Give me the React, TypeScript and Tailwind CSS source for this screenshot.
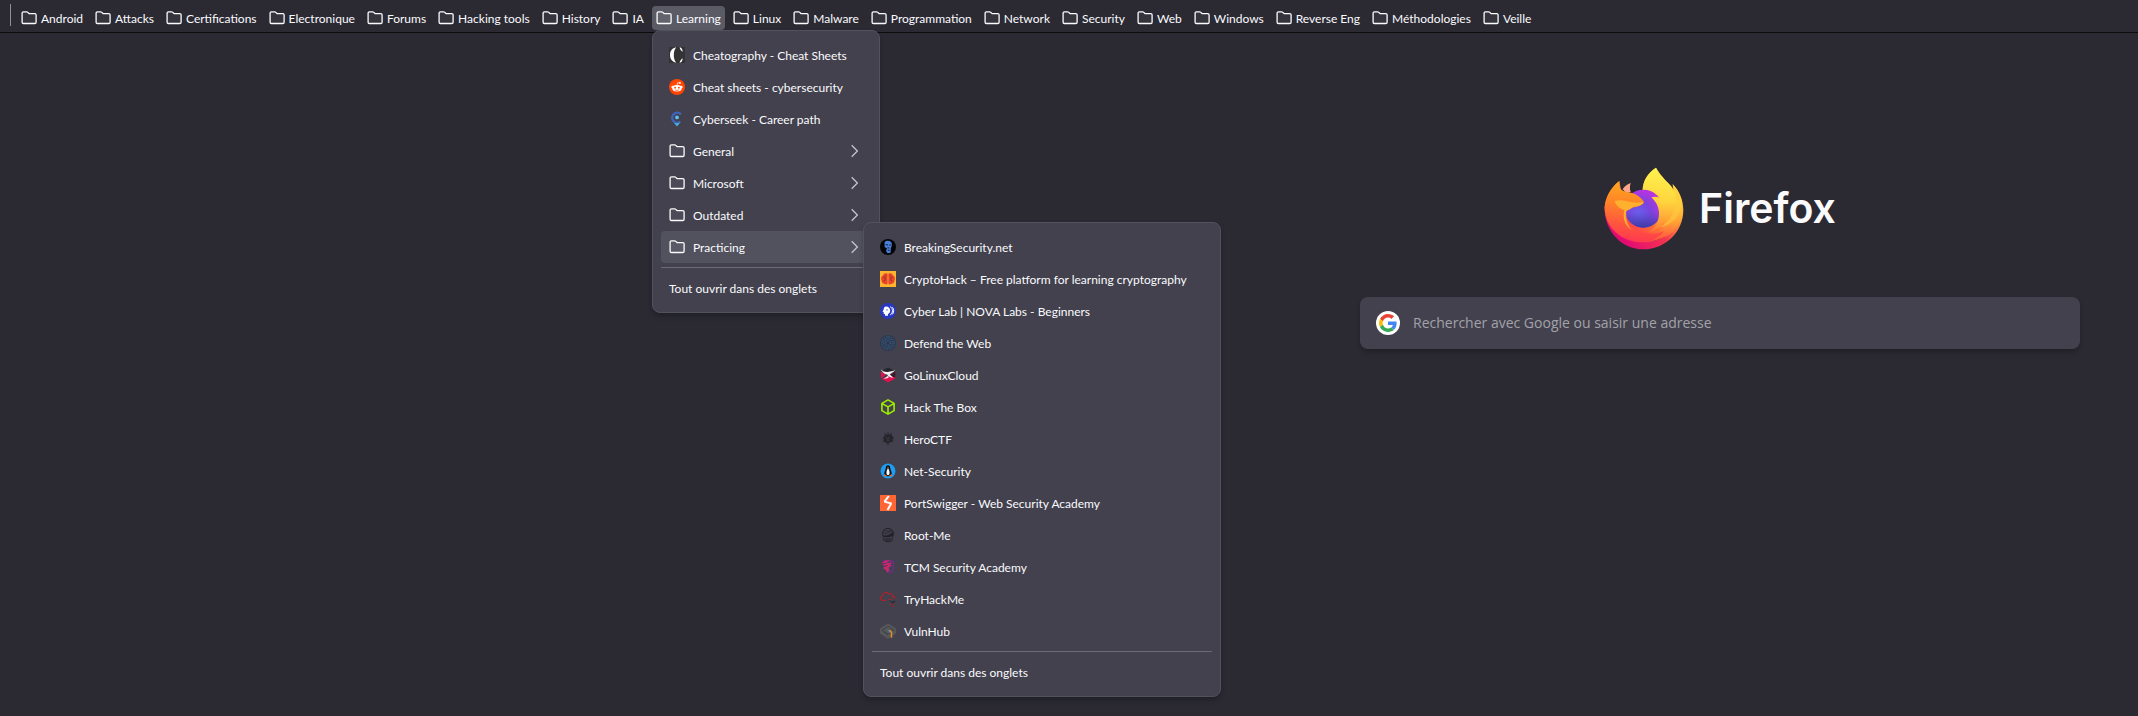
import type { ReactNode } from "react";

type Entry = { label: string; icon: ReactNode; submenu?: ReactNode; active?: boolean };

function FolderIcon() {
  return (
    <svg viewBox="0 0 16 16" className="size-4 shrink-0" fill="#ffffff0d" stroke="#fbfbfe" strokeWidth="1.3" strokeLinejoin="round">
      <path d="M1.1 12.2V3.2a1.3 1.3 0 0 1 1.3-1.3h3.2c.5 0 .9.2 1.2.5l.9.9c.3.3.5.4.9.4h5.2a1.3 1.3 0 0 1 1.3 1.3v7.2a1.3 1.3 0 0 1-1.3 1.3H2.4a1.3 1.3 0 0 1-1.3-1.3z" />
    </svg>
  );
}

function Chevron() {
  return (
    <svg viewBox="0 0 16 16" className="ml-auto size-4 shrink-0" fill="none" stroke="#c5c5cc" strokeWidth="1.3">
      <path d="M4.7 2.2l5.7 5.8-5.7 5.8" />
    </svg>
  );
}

function Glyph({ children }: { children: ReactNode }) {
  return (
    <svg viewBox="0 0 16 16" className="size-4 shrink-0">
      {children}
    </svg>
  );
}

const icons = {
  cheatography: (
    <Glyph>
      <path fill="#333" d="M0 0h16v16H0z" />
      <path fill="#fff" d="M7.200.3C3 1.200 1 4.200 1 8s2 6.800 6.200 7.700C5.500 13.600 4.800 11 4.800 8S5.500 2.400 7.200.3z" />
      <path fill="#fff" d="M10.600.2c2.200.5 3 2.200 3.100 4.500-1.600-1-2.700-2.500-3.100-4.500zM10.600 15.800c2.200-.5 3-2.200 3.100-4.500-1.600 1-2.700 2.500-3.100 4.500z" />
    </Glyph>
  ),
  reddit: (
    <Glyph>
      <circle cx="8" cy="8" r="8" fill="#ff4500" />
      <ellipse cx="8" cy="9.300" rx="4.700" ry="3.300" fill="#fff" />
      <circle cx="3.600" cy="8" r="1.200" fill="#fff" />
      <circle cx="12.400" cy="8" r="1.200" fill="#fff" />
      <circle cx="10.900" cy="3.900" r=".95" fill="#fff" />
      <path d="M8 6.200l.6-2.500 2.300.3" fill="none" stroke="#fff" strokeWidth=".7" />
      <circle cx="6.100" cy="8.700" r=".9" fill="#ff4500" />
      <circle cx="9.900" cy="8.700" r=".9" fill="#ff4500" />
      <path d="M6 10.800c1.200.8 2.800.8 4 0" fill="none" stroke="#ff4500" strokeWidth=".7" />
    </Glyph>
  ),
  cyberseek: (
    <Glyph>
      <path d="M11.900 3.300A5 5 0 1 0 11.400 10.600" fill="none" stroke="#3f63b8" strokeWidth="2.500" />
      <circle cx="8" cy="6.400" r="1.900" fill="#55c3ea" />
      <path d="M4.800 11.500c2 1 4.400 1 6.400 0L8 15.600z" fill="#45b4df" />
    </Glyph>
  ),
  breaking: (
    <Glyph>
      <circle cx="8" cy="8" r="8" fill="#050507" />
      <path d="M4.600 3c2-2 6-1.700 7 .8.5 1.700.2 4-.8 5.300l-.2 4.600-3 .6-1.600-2.400 1-2.300-2.400-1.600z" fill="#4a7fd6" />
      <path d="M5.600 5.600l2.400.4M9.200 6.200l1.700-.4M7.400 8.800l2 .2M7.800 11.200l1.800.2" stroke="#0b1836" strokeWidth=".9" />
    </Glyph>
  ),
  cryptohack: (
    <Glyph>
      <path fill="#fcb42f" d="M0 0h16v16H0z" />
      <path fill="#e8452c" d="M7.600 2.400C5 1.700 3.400 2.800 2.800 4.500 1 5.300.7 8 1.500 9.600c.2 2.300 1.700 3.600 3.500 3.500 1.300.7 2.400.4 2.600-.3zM8.400 2.400c2.600-.7 4.200.4 4.800 2.100 1.800.8 2.100 3.500 1.300 5.100-.2 2.300-1.700 3.600-3.500 3.500-1.300.7-2.400.4-2.600-.3z" />
      <path d="M3.200 6.200l2 .6v2.400l-1.600 1M5.400 4.200l.8 1.600M12.800 6.200l-2 .6v2.400l1.600 1M10.600 4.200l-.8 1.600" stroke="#7e3326" strokeWidth=".7" fill="none" />
    </Glyph>
  ),
  nova: (
    <Glyph>
      <circle cx="8" cy="8" r="8" fill="#2638c4" />
      <path d="M6 3.400c2.600 0 4.200 1.700 4.200 4 0 2-1 3-2.200 3.600v1.800H5v-1.900H3.700V9L2.500 8.500l1.200-2c0-1.900 1-3.100 2.300-3.100z" fill="#fff" />
      <circle cx="7" cy="6.900" r=".7" fill="#2638c4" />
      <path d="M10.200 3.700c3 1.500 3 6.600 0 8.200" stroke="#fff" strokeWidth="1" fill="none" />
      <path d="M12.200 4.200c2 1.600 2 5.600 0 7.300" stroke="#fff" strokeWidth="1" fill="none" />
    </Glyph>
  ),
  defend: (
    <Glyph>
      <circle cx="8" cy="8" r="8" fill="#2a3a52" />
      <g fill="none" stroke="#4a6a8a" strokeWidth=".8" strokeDasharray="1.400 1">
        <circle cx="8" cy="8" r="6.200" />
        <circle cx="8" cy="8" r="4.300" />
        <circle cx="8" cy="8" r="2.400" />
      </g>
    </Glyph>
  ),
  golinux: (
    <Glyph>
      <path d="M8 .4l7.300 3.800L8 8 .8 4.200z" fill="#25252b" />
      <path d="M.8 4.400L6 7.600 1 11.400zM15.300 4.600v6.800L8 15.400 2 12l5-2.600z" fill="#e3104f" />
      <path d="M10 8.200l5.300-3.800v6.400z" fill="#25252b" />
      <path d="M.8 2.200c2.200 2.400 4.600 3 7.200 2.700 2.600-.4 5-.8 7.200-1.900-1.600 2.400-3.800 3.200-5.600 4.200l3.600 3.500c-3-.2-5-1-6-3.200C4.200 7 2 5.200.8 2.200z" fill="#f5f2f3" />
      <path d="M3 11.400c2-.4 3.600-1.300 4.800-2.500l1.200 1c-1.400 1.500-3.600 1.900-6 1.500z" fill="#f5f2f3" />
    </Glyph>
  ),
  htb: (
    <Glyph>
      <path d="M8 .9l6.100 3.500v7.200L8 15.100l-6.100-3.500V4.400zM2.600 4.900L8 7.900l5.400-3M8 7.900v6" fill="none" stroke="#9fef00" strokeWidth="1.600" strokeLinejoin="round" strokeLinecap="round" />
    </Glyph>
  ),
  hero: (
    <Glyph>
      <path d="M8 2.500l1.500 1.200L11.200 3l.6 2 1.800 1-1 2 .4 2-2 .6-1.600 2L8 11.600 6.400 13 5.400 10.900 3.200 10l.8-2-.8-2 1.900-.9.500-2.100 1.600.7z" fill="#26252d" />
      <path d="M2.500 7.500h2.500M11 7.500h3M5 1.800v2.700M8 1v3M11 1.800v2.700M8 12v2.500M3 11l2-1M13 11l-2-1" stroke="#26252d" strokeWidth=".8" />
      <path d="M6 6.500l1.600 1 2-1M6.800 9.200h2.400" stroke="#4b4a55" strokeWidth=".7" fill="none" />
    </Glyph>
  ),
  netsec: (
    <Glyph>
      <circle cx="8" cy="8" r="7.500" fill="#1c9cf3" />
      <path d="M8 2.200c1.500 0 2.200 1 2.200 2.600 0 1.700 1.500 3.500 1.500 5.700 0 1.500-1.300 2.700-3.700 2.700s-3.700-1.200-3.700-2.700c0-2.200 1.500-4 1.500-5.700 0-1.600.7-2.600 2.200-2.600z" fill="#141414" />
      <path d="M8 5.200c1 1.500 1.500 2.600 1.500 4.700 0 1.400-.5 2-1.500 2s-1.500-.6-1.500-2c0-2.100.5-3.200 1.500-4.700z" fill="#fff" />
      <path d="M7 4.600h2l-1 1.300zM4.400 11.200l2.800 1.500-2 .8-1.400-.8zM11.600 11.200l-2.800 1.500 2 .8 1.400-.8z" fill="#f36b21" />
    </Glyph>
  ),
  port: (
    <Glyph>
      <path fill="#ff6633" d="M0 0h16v16H0z" />
      <path d="M8.800 1L4.500 6.600l6.700 1.900L7.500 15" fill="none" stroke="#fff" strokeWidth="2" strokeLinejoin="bevel" />
    </Glyph>
  ),
  rootme: (
    <Glyph>
      <path d="M8 1.400c3.300 0 5.400 2.200 5.400 5.100 0 1.900-.6 3-1 3.800l-.5 3.200-2.300 1.100H6.400l-2.300-1.100-.5-3.200c-.5-.8-1-1.900-1-3.800C2.600 3.600 4.700 1.400 8 1.400z" fill="none" stroke="#222129" strokeWidth="1" />
      <path d="M3.200 8.300c3.500.6 7-.7 9.900-3.600v3.600c-2 2.200-5.800 2.400-8.800 1.700z" fill="#222129" />
      <path d="M4.500 3.600c2.500 1 5 .8 7.400-.8M3.400 6c3 .8 6 0 8.500-2.500M5.800 12.400h4.600M6.200 11v3M8 11.300v3M9.800 11v3" fill="none" stroke="#222129" strokeWidth=".7" />
    </Glyph>
  ),
  tcm: (
    <Glyph>
      <path d="M2.400 2.600L8 1.200l5.600 1.400-.2 6.600C12.600 12 10.400 13.800 8 14.600" fill="none" stroke="#663083" strokeWidth="1.500" />
      <path d="M2.200 3.600C4 1.200 8 .6 11 1.800 8.500 2.500 7.300 3.200 6.300 4l6-.6c-.8 1.500-2 2-3 2.600h2.600c-1 1.600-2.200 2.200-3.400 2.700l1 2.200L7.700 14l-2-3.100L2.900 9l2-1.700-2.400-2z" fill="#c42871" />
      <path d="M2.600 4.300l3 .2M4.600 7.200l3-.8" stroke="#42305a" strokeWidth=".8" />
    </Glyph>
  ),
  thm: (
    <Glyph>
      <path d="M6 9.300H3C.4 9.300-.2 6 2.200 5.300 2 1.800 6.700 0 8.600 2.800c2-.8 4 .6 3.800 2.500 1.600.1 2.500 1 2.500 2.100" fill="none" stroke="#b51f29" strokeWidth="1.200" />
      <path d="M8.200 8.300h3M12.600 8.300h1M9.400 13.200h1.700M12.600 13.200h2M12.300 15.300h2" stroke="#b51f29" strokeWidth=".9" />
      <path d="M9.800 10.200h1.500M12.300 10.500h3M11 11.700h3.500" stroke="#2a2930" strokeWidth=".9" />
    </Glyph>
  ),
  vulnhub: (
    <Glyph>
      <path d="M8 .2L16 5.400v5L8 15.900 0 10.400v-5z" fill="#56575a" />
      <path d="M2 7.200l6-4 6 4-6 4zM4 9l4 2.600" fill="none" stroke="#3c3d42" strokeWidth=".8" />
      <path d="M7.200 6.600l3.400 1.600v2l-2-1z" fill="#2c7cc0" />
      <path d="M8.400 7.200h2.200l1.600 1.600v6h-1.400V9.400z" fill="#f08a1c" />
    </Glyph>
  ),
};

const folder = <FolderIcon />;

const practicing: Entry[] = [
  { label: "BreakingSecurity.net", icon: icons.breaking },
  { label: "CryptoHack – Free platform for learning cryptography", icon: icons.cryptohack },
  { label: "Cyber Lab | NOVA Labs - Beginners", icon: icons.nova },
  { label: "Defend the Web", icon: icons.defend },
  { label: "GoLinuxCloud", icon: icons.golinux },
  { label: "Hack The Box", icon: icons.htb },
  { label: "HeroCTF", icon: icons.hero },
  { label: "Net-Security", icon: icons.netsec },
  { label: "PortSwigger - Web Security Academy", icon: icons.port },
  { label: "Root-Me", icon: icons.rootme },
  { label: "TCM Security Academy", icon: icons.tcm },
  { label: "TryHackMe", icon: icons.thm },
  { label: "VulnHub", icon: icons.vulnhub },
];

function Menu({ entries, className, name }: { entries: Entry[]; className: string; name: string }) {
  return (
    <div role="menu" aria-label={name} className={`absolute rounded-lg border border-[#52515e] bg-[#42414d] p-2 shadow-md shadow-black/20 ${className}`}>
      {entries.map((entry) => (
        <div key={entry.label} className="relative">
          <button
            type="button"
            role="menuitem"
            className={`flex h-8 w-full items-center gap-2 rounded px-2 text-left whitespace-nowrap ${entry.active ? "bg-[#52525e]" : ""}`}
          >
            {entry.icon}
            <span className="pt-0.5">{entry.label}</span>
            {entry.icon === folder && <Chevron />}
          </button>
          {entry.submenu}
        </div>
      ))}
      <hr className="my-1 border-[#6b6a76]" />
      <button type="button" role="menuitem" className="flex h-8 w-full items-center px-2 text-left whitespace-nowrap">
        <span className="pt-0.5">Tout ouvrir dans des onglets</span>
      </button>
    </div>
  );
}

const learning: Entry[] = [
  { label: "Cheatography - Cheat Sheets", icon: icons.cheatography },
  { label: "Cheat sheets - cybersecurity", icon: icons.reddit },
  { label: "Cyberseek - Career path", icon: icons.cyberseek },
  { label: "General", icon: folder },
  { label: "Microsoft", icon: folder },
  { label: "Outdated", icon: folder },
  {
    label: "Practicing",
    icon: folder,
    active: true,
    submenu: <Menu name="Practicing" entries={practicing} className="-top-[9px] left-full -ml-2 w-[358px]" />,
  },
];

const folders = [
  "Android", "Attacks", "Certifications", "Electronique", "Forums", "Hacking tools", "History", "IA", "Learning",
  "Linux", "Malware", "Programmation", "Network", "Security", "Web", "Windows", "Reverse Eng", "Méthodologies", "Veille",
];

function BookmarksBar() {
  return (
    <nav aria-label="Bookmarks" className="flex h-[33px] items-end border-b border-[#0c0c0d] pb-[2px] pl-[10px]">
      <div className="mr-[6px] h-[22px] w-px self-center bg-[#8f8f98]" />
      <ul className="flex gap-1">
        {folders.map((name) => (
          <li key={name} className="relative">
            <button
              type="button"
              className={`flex h-6 items-center gap-1 rounded px-1 whitespace-nowrap ${name === "Learning" ? "bg-[#5b5b66]" : ""}`}
            >
              {folder}
              <span className="pt-0.5">{name}</span>
            </button>
            {name === "Learning" && <Menu name="Learning" entries={learning} className="top-full left-0 z-10 w-[228px]" />}
          </li>
        ))}
      </ul>
    </nav>
  );
}

function FirefoxLogo() {
  return (
    <svg viewBox="76 50 240 249" className="h-[83px] w-20">
      <defs>
        <linearGradient id="body" x1="285" y1="95" x2="105" y2="275" gradientUnits="userSpaceOnUse">
          <stop offset="0" stopColor="#ffe14a" />
          <stop offset=".3" stopColor="#ffb234" />
          <stop offset=".55" stopColor="#ff6b36" />
          <stop offset=".8" stopColor="#ff3750" />
          <stop offset="1" stopColor="#f5156c" />
        </linearGradient>
        <linearGradient id="rim" x1="310" y1="190" x2="150" y2="290" gradientUnits="userSpaceOnUse">
          <stop offset="0" stopColor="#ffb436" />
          <stop offset=".45" stopColor="#f5334f" />
          <stop offset="1" stopColor="#e20b74" />
        </linearGradient>
        <linearGradient id="flame" x1="240" y1="50" x2="225" y2="275" gradientUnits="userSpaceOnUse">
          <stop offset="0" stopColor="#fff44f" />
          <stop offset=".45" stopColor="#ffd53e" />
          <stop offset=".72" stopColor="#ffa035" />
          <stop offset="1" stopColor="#ff4a42" />
        </linearGradient>
        <linearGradient id="head" x1="140" y1="90" x2="125" y2="270" gradientUnits="userSpaceOnUse">
          <stop offset="0" stopColor="#ffab1f" />
          <stop offset=".4" stopColor="#ff8128" />
          <stop offset=".75" stopColor="#ff5340" />
          <stop offset="1" stopColor="#ff3a4e" />
        </linearGradient>
        <radialGradient id="globe" cx="180" cy="190" r="72" gradientUnits="userSpaceOnUse">
          <stop offset="0" stopColor="#6a5fee" />
          <stop offset=".5" stopColor="#7a44dc" />
          <stop offset="1" stopColor="#b833e1" />
        </radialGradient>
        <linearGradient id="depth" x1="195" y1="120" x2="195" y2="235" gradientUnits="userSpaceOnUse">
          <stop offset=".55" stopColor="#3f46b8" stopOpacity="0" />
          <stop offset="1" stopColor="#363a9e" />
        </linearGradient>
      </defs>
      <path fill="url(#rim)" d="M78 165C74 238 126 297 195 297c66 0 119-53 119-118 0-30-12-58-32-77l6 60-20 90c-50 38-150 34-190-87z" />
      <path fill="url(#body)" d="M122 92C96 114 80 142 78 172c0 62 52 104 112 104 66 0 118-44 121-100 0-20-5-40-15-57l-14-17c4 9 6 18 6 26-2-14-40-48-56-76-22 14-40 38-40 68L165 150 128 125z" />
      <path fill="url(#flame)" d="M232 52c-24 16-40 40-40 68 22-1 45 9 54 24 14 22 22 70-6 122 40-8 70-42 70-84-1-24-8-46-28-80 4 9 6 18 6 26-4-28-44-42-56-76z" />
      <path fill="#ffc93d" opacity=".6" d="M282 102c14 30 12 62 0 88-10 20-25 35-44 42 40-6 66-32 68-64 1-26-8-49-24-66z" />
      <circle cx="194" cy="175" r="57" fill="url(#globe)" />
      <circle cx="194" cy="175" r="57" fill="url(#depth)" />
      <path fill="url(#flame)" d="M218 141c12-3 21-2 29 5-3-4-6-7-10-10 27 17 33 50 20 76-10 20-30 32-52 36 38-18 52-72 13-107z" />
      <path fill="#ffa58c" d="M132 117c4-8 12-14 24-19-3 9-3 18 0 27l-15 1z" />
      <path fill="url(#head)" d="M122 92c-26 20-42 48-44 78 0 54 40 100 108 104 30 2 54-10 70-32-16 8-34 10-50 6-40-2-66-30-63-66 8-6 18-10 28-12 12-2 19-7 25-15-8-14-28-28-49-30-14-1-21-7-24-14-2-6-2-12-1-19z" />
      <path fill="#ffb02e" d="M108 152c14-4 26-2 38 1 14 4 29 6 47 2 3 1 2 4-1 6-9 6-17 7-28 8-9 6-14 11-21 12-6 22 4 44 16 58-20-12-28-36-22-60-13-3-24-12-29-27z" />
    </svg>
  );
}

function GoogleLogo() {
  return (
    <span className="flex size-6 shrink-0 items-center justify-center rounded-full bg-white">
      <svg viewBox="0 0 48 48" className="size-[18px]">
        <path fill="#EA4335" d="M24 9.500c3.540 0 6.710 1.220 9.210 3.600l6.850-6.850C35.900 2.380 30.470 0 24 0 14.620 0 6.510 5.380 2.560 13.220l7.980 6.190C12.430 13.720 17.740 9.500 24 9.500z" />
        <path fill="#4285F4" d="M46.980 24.550c0-1.570-.15-3.090-.38-4.550H24v9.020h12.940c-.58 2.960-2.260 5.480-4.780 7.180l7.730 6c4.510-4.180 7.090-10.360 7.090-17.650z" />
        <path fill="#FBBC05" d="M10.530 28.590c-.48-1.450-.76-2.990-.76-4.590s.27-3.140.76-4.590l-7.980-6.190C.92 16.460 0 20.120 0 24c0 3.880.92 7.540 2.560 10.780l7.970-6.190z" />
        <path fill="#34A853" d="M24 48c6.480 0 11.930-2.130 15.890-5.810l-7.730-6c-2.150 1.450-4.920 2.300-8.160 2.300-6.260 0-11.570-4.220-13.470-9.910l-7.980 6.190C6.510 42.620 14.620 48 24 48z" />
      </svg>
    </span>
  );
}

export default function App() {
  return (
    <div className="min-h-screen bg-[#2b2a33] font-['Lato',sans-serif] text-xs text-[#fbfbfe]">
      <BookmarksBar />
      <main className="flex justify-end pt-[134px] pr-[58px]">
        <div className="flex w-[720px] flex-col items-center gap-[47px]">
          <h1 className="flex items-center gap-[15px] font-['Inter',sans-serif] text-[41px] leading-none font-semibold">
            <FirefoxLogo />
            Firefox
          </h1>
          <label className="flex h-[52px] w-full items-center gap-[13px] rounded-lg bg-[#42414d] px-4 shadow-md shadow-black/20">
            <GoogleLogo />
            <input
              type="text"
              aria-label="Rechercher avec Google ou saisir une adresse"
              placeholder="Rechercher avec Google ou saisir une adresse"
              className="min-w-0 flex-1 bg-transparent font-['Open_Sans',sans-serif] text-sm outline-none placeholder:text-[#a2a2aa]"
            />
          </label>
        </div>
      </main>
    </div>
  );
}
